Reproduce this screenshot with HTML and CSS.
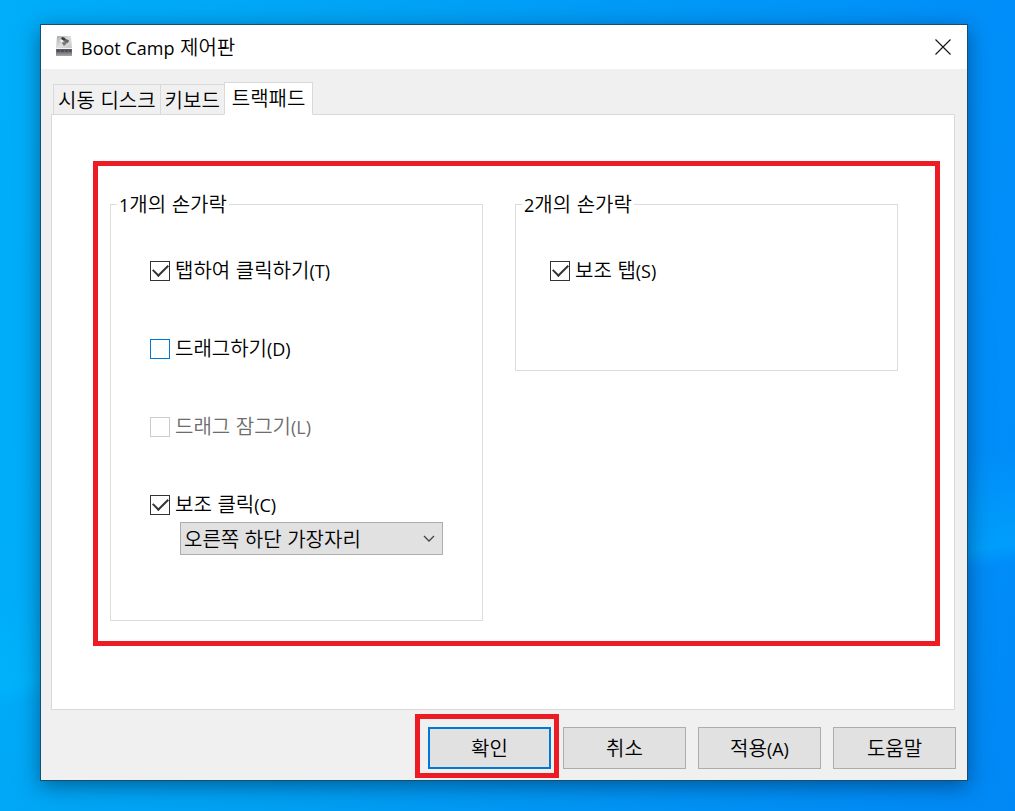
FILE: index.html
```html
<!DOCTYPE html>
<html lang="ko">
<head>
<meta charset="utf-8">
<meta name="viewport" content="width=device-width, initial-scale=1">
<title>Boot Camp 제어판</title>
<link rel="stylesheet" href="styles.css">
</head>
<body>
<main class="window">
  <header class="titlebar">
    <svg class="app-icon" viewBox="0 0 20 22" aria-hidden="true">
      <defs>
        <linearGradient id="lid" x2="1" y2="1"><stop offset="0" stop-color="#a8a8a8"/><stop offset=".5" stop-color="#dedede"/><stop offset="1" stop-color="#c2c2c2"/></linearGradient>
        <linearGradient id="base" x2="0" y2="1"><stop offset="0" stop-color="#555661"/><stop offset=".5" stop-color="#777"/><stop offset="1" stop-color="#a8a8a8"/></linearGradient>
      </defs>
      <path d="M3 1h14l1 13H2z" fill="url(#lid)"/>
      <path d="M2 14h16v7H2z" fill="url(#base)"/>
      <path d="M2 13.500h16" stroke="#f4f4f4"/>
      <path d="M3 16h14" stroke="#4d4d58" stroke-width="2" stroke-dasharray="3 1"/>
      <path d="M5 5l4-3 6 4-5 4z" fill="#8b8b8b"/>
      <path d="M8 2l3 1 1 2-3 1-2-2z" fill="#3a3a3a"/>
      <path d="M5 5l2-1 3 2-2 2z" fill="#eee"/>
      <path d="M11 4l4 1-1 3-3-1z" fill="#666"/>
      <path d="M8 8l3-1 2 1-3 3z" fill="#777"/>
    </svg>
    <h1 class="title"><span class="latin">Boot Camp</span> 제어판</h1>
    <button class="close" type="button" aria-label="닫기">
      <svg viewBox="0 0 16 16" aria-hidden="true"><path d="M.5.5l15 15M15.500.5l-15 15" fill="none" stroke="#111" stroke-width="1.100"/></svg>
    </button>
  </header>

  <div class="tabs" role="tablist">
    <button class="tab" type="button" role="tab" aria-selected="false">시동 디스크</button>
    <button class="tab" type="button" role="tab" aria-selected="false">키보드</button>
    <button class="tab tab-active" type="button" role="tab" aria-selected="true">트랙패드</button>
  </div>

  <section class="pane" role="tabpanel">
    <div class="highlight">
      <fieldset class="group">
        <legend><span class="latin">1</span>개의 손가락</legend>
        <div class="options">
          <label class="option"><input class="check" type="checkbox" checked><span>탭하여 클릭하기<span class="latin">(T)</span></span></label>
          <label class="option"><input class="check check-hot" type="checkbox"><span>드래그하기<span class="latin">(D)</span></span></label>
          <label class="option option-disabled"><input class="check" type="checkbox" disabled><span>드래그 잠그기<span class="latin">(L)</span></span></label>
          <div class="option-block">
            <label class="option"><input class="check" type="checkbox" checked><span>보조 클릭<span class="latin">(C)</span></span></label>
            <div class="select-wrap">
              <select class="select" aria-label="보조 클릭 위치"><option>오른쪽 하단 가장자리</option></select>
              <svg class="chevron" viewBox="0 0 12 8" aria-hidden="true"><path d="M1 1l5 5 5-5" fill="none" stroke="#444" stroke-width="1.300"/></svg>
            </div>
          </div>
        </div>
      </fieldset>
      <fieldset class="group group-short">
        <legend><span class="latin">2</span>개의 손가락</legend>
        <div class="options">
          <label class="option"><input class="check" type="checkbox" checked><span>보조 탭<span class="latin">(S)</span></span></label>
        </div>
      </fieldset>
    </div>
  </section>

  <footer class="actions">
    <span class="marked"><button class="button button-default" type="button">확인</button></span>
    <button class="button" type="button">취소</button>
    <button class="button" type="button">적용<span class="latin">(A)</span></button>
    <button class="button" type="button">도움말</button>
  </footer>
</main>
</body>
</html>
```
FILE: styles.css
```css
* {
  box-sizing: border-box;
}

body {
  margin: 0;
  min-height: 100vh;
  display: flex;
  padding: 24px 47px 30px 40px;
  background:
    linear-gradient(172deg, transparent 62%, rgba(0, 190, 255, 0.35) 72%, rgba(0, 110, 215, 0.04) 74%, rgba(0, 110, 215, 0.12) 100%),
    linear-gradient(95deg, #00aef9 0%, #00a6f6 30%, #0098f8 65%, #008cfa 100%);
  color: #000;
  font-family: "Noto Sans CJK KR", sans-serif;
  font-size: 20px;
  font-weight: 350;
  line-height: 26px;
}

button,
select,
input {
  margin: 0;
  color: inherit;
  font: inherit;
}

.latin {
  font-family: "Open Sans", sans-serif;
  font-size: 18px;
  font-weight: 400;
}

.window {
  flex: 1;
  display: flex;
  flex-direction: column;
  min-width: 0;
  border: 1px solid #164e70;
  background: #f0f0f0;
  box-shadow: 0 5px 20px rgba(0, 30, 60, 0.5);
}

.titlebar {
  display: flex;
  align-items: center;
  height: 44px;
  padding: 0 16px 0 13px;
  background: #fff;
}

.app-icon {
  width: 20px;
  height: 22px;
  margin-bottom: 2px;
}

.title {
  flex: 1;
  margin: 0 0 0 7px;
  font: inherit;
}

.close {
  padding: 0;
  border: 0;
  background: none;
}

.close svg {
  display: block;
  width: 16px;
  height: 16px;
}

.tabs {
  display: flex;
  align-items: flex-end;
  height: 46px;
  padding-left: 12px;
  z-index: 1;
}

.tab {
  height: 31px;
  padding: 0 4px;
  border: 1px solid #d9d9d9;
  border-right: 0;
  background: #f0f0f0;
  white-space: nowrap;
}

.tab-active {
  height: 33px;
  padding: 0 7px 2px;
  border-right: 1px solid #d9d9d9;
  border-bottom-color: #fff;
  background: #fff;
}

.pane {
  flex: 1;
  display: flex;
  margin: -1px 12px 0 10px;
  padding: 46px 14px 63px 41px;
  border: 1px solid #d9d9d9;
  background: #fff;
}

.highlight {
  flex: 1;
  display: grid;
  grid-template-columns: 373fr 383fr;
  gap: 32px;
  padding: 25px 37px 20px 12px;
  border: 5px solid #ed1c24;
}

.group {
  min-width: 0;
  margin: 0;
  padding: 0 39px;
  border: 1px solid #dcdcdc;
}

.group-short {
  align-self: start;
  height: 180px;
  padding-left: 34px;
}

.group legend {
  margin-left: -33px;
  padding: 0 2px;
  line-height: 25px;
}

.group-short legend {
  margin-left: -28px;
}

.options {
  display: flex;
  flex-direction: column;
  gap: 51px;
  padding-top: 39px;
}

.option {
  display: flex;
  align-items: center;
  gap: 5px;
  white-space: nowrap;
}

.option-disabled {
  color: #6d6d6d;
}

.check {
  appearance: none;
  flex: none;
  display: grid;
  place-items: center;
  width: 20px;
  height: 20px;
  border: 1px solid #333;
  background: #fff;
}

.check:checked::before {
  content: "";
  width: 13px;
  height: 7px;
  margin-bottom: 4px;
  border: solid #333;
  border-width: 0 0 2px 2px;
  transform: rotate(-45deg);
}

.check-hot {
  border-color: #0078d7;
}

.check:disabled {
  border-color: #ccc;
}

.select-wrap {
  display: grid;
  align-items: center;
  margin: 4px 0 0 30px;
}

.select {
  grid-area: 1 / 1;
  appearance: none;
  width: 100%;
  height: 33px;
  padding: 0 24px 0 3px;
  border: 1px solid #adadad;
  border-radius: 0;
  background: #e1e1e1;
}

.chevron {
  grid-area: 1 / 1;
  justify-self: end;
  width: 12px;
  height: 8px;
  margin-right: 8px;
  pointer-events: none;
}

.actions {
  display: flex;
  justify-content: flex-end;
  gap: 12px;
  padding: 17px 11px 11px;
}

.button {
  width: 123px;
  height: 42px;
  padding: 0;
  border: 1px solid #adadad;
  background: #e1e1e1;
}

.button-default {
  border: 2px solid #0078d7;
}

.marked {
  position: relative;
}

.marked::after {
  content: "";
  position: absolute;
  inset: -13px -8px -9px -13px;
  border: 5px solid #ed1c24;
  pointer-events: none;
}
```
